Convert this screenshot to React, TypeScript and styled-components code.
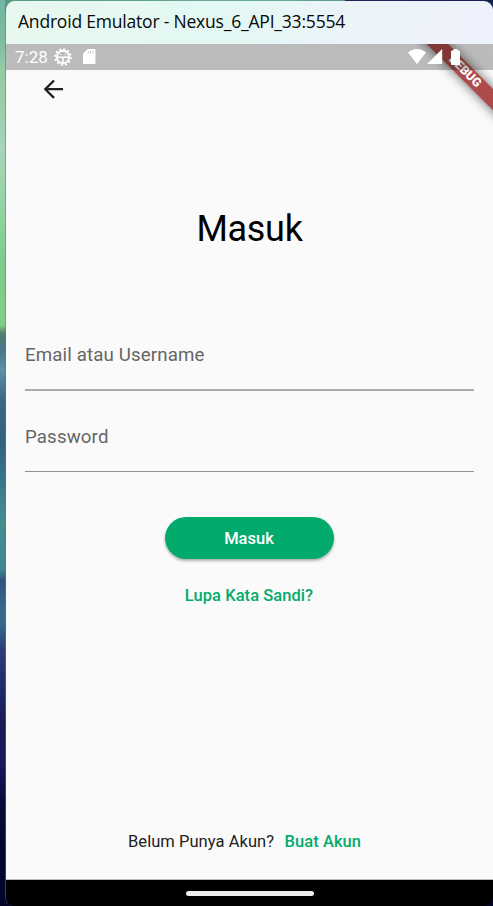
import React from "react";
import styled, { createGlobalStyle } from "styled-components";

const GREEN = "#02ab6c";

const Global = createGlobalStyle`
  * { box-sizing: border-box; }
  html, body { margin: 0; padding: 0; }
  body { font-family: Roboto, sans-serif; overflow: hidden; }
`;

const Desktop = styled.div`
  width: 493px;
  height: 906px;
  padding: 1px 0 0 5px;
  overflow: hidden;
  background:
    linear-gradient(90deg, #5c978b 0, #6ba897 260px, #5d9a90 339px, #1d2856 341px, #151f50 100%) 5px 0 / 100% 12px no-repeat,
    linear-gradient(180deg, #72b7a4 0, #78b9a0 30px, #93cba5 70px, #9bcfac 110px, #a9d4b8 150px, #8fd3a0 215px, #7dcc8c 265px,
      #82cf8a 325px, #54806f 333px, #47758a 350px, #5e8fa5 370px, #3c6787 400px, #32617f 440px, #3b7c8c 490px,
      #468d90 522px, #40868f 570px, #2f5480 580px, #38698b 610px, #37688a 625px, #2b3c76 650px, #202a68 690px,
      #171c55 725px, #14195a 765px, #0b0a3c 800px, #05042f 850px, #05052a 906px);
`;

const Emulator = styled.div`
  height: 905px;
  width: 488px;
  display: flex;
  flex-direction: column;
  overflow: hidden;
  border-left: 1px solid rgba(110, 110, 120, 0.55);
  border-radius: 9px;
`;

const TitleBar = styled.header`
  height: 43px;
  flex: none;
  padding: 0 0 3px 12px;
  display: flex;
  align-items: center;
  background: linear-gradient(100deg, #e8f8ef 0%, #e3f8f4 45%, #edf3fa 75%, #eef2fc 100%);
  color: #080808;
  font: 17.5px "Open Sans", sans-serif;
  letter-spacing: -0.2px;
  white-space: pre;
`;

const Screen = styled.main`
  position: relative;
  height: 835px;
  flex: none;
  overflow: hidden;
  display: flex;
  flex-direction: column;
  align-items: center;
  background: #fafafa;
`;

const StatusBar = styled.div`
  position: relative;
  z-index: 2;
  width: 100%;
  height: 26px;
  flex: none;
  background: rgba(0, 0, 0, 0.25);
  color: #fff;
  display: flex;
  justify-content: space-between;
`;

const Clock = styled.span`
  font-size: 17px;
  line-height: 26px;
  width: 39px;
`;

const StatusGroup = styled.div<{ $side: "left" | "right" }>`
  display: flex;
  align-items: center;
  padding: ${(p) => (p.$side === "left" ? "0 0 1px 9px" : "0 33px 1px 0")};
`;

const Ribbon = styled.div`
  position: absolute;
  left: 389.2px;
  top: 19.5px;
  width: 140px;
  height: 14.6px;
  transform: rotate(45deg);
  background: #ae4a4a;
  box-shadow: 0 0 12px rgba(0, 0, 0, 0.6);
  color: #fff;
  font-size: 12.4px;
  font-weight: 900;
  line-height: 14.6px;
  text-align: center;
`;

const AppBar = styled.div`
  width: 100%;
  height: 40px;
  flex: none;
  padding: 9px 0 0 38px;
`;

const Heading = styled.h1`
  margin: 97px 0 0;
  height: 44px;
  flex: none;
  color: #000;
  font-size: 36px;
  font-weight: 400;
  line-height: 44px;
  letter-spacing: -0.3px;
`;

const Form = styled.form`
  width: 449px;
  flex: none;
  margin-top: 89px;
  display: flex;
  flex-direction: column;
  gap: 31px;
`;

const Field = styled.label<{ $line: number; $tone: string }>`
  height: ${(p) => 49 + p.$line}px;
  display: block;
  border-bottom: ${(p) => p.$line}px solid ${(p) => p.$tone};
  color: #666;
  font-size: 18.7px;
  line-height: 22px;
  letter-spacing: 0.13px;
  padding-top: 4px;
`;

const SubmitButton = styled.button`
  width: 169.5px;
  height: 42px;
  flex: none;
  margin-top: 45px;
  border: 0;
  padding: 1px 1px 0 0;
  border-radius: 21px;
  background: ${GREEN};
  color: #fff;
  font: 500 16.5px/41px Roboto, sans-serif;
  box-shadow: 0 2px 3px rgba(0, 0, 0, 0.3);
`;

const TextLink = styled.a`
  color: ${GREEN};
  font-size: 16.5px;
  font-weight: 500;
  line-height: 20px;
  letter-spacing: 0.05px;
`;

const Forgot = styled.div`
  margin: 27px 1px 0 0;
  height: 20px;
`;

const Footer = styled.footer`
  margin-top: auto;
  padding-bottom: 27px;
  width: 100%;
  padding-left: 122px;
  display: flex;
  gap: 10.5px;
  color: #222;
  font-size: 16.5px;
  line-height: 20px;
  letter-spacing: 0.05px;
`;

const NavBar = styled.div`
  height: 27px;
  flex: none;
  border-top: 1px solid #bbb;
  background: #000;
  display: flex;
  justify-content: center;
  padding-top: 11px;
`;

const Handle = styled.div`
  width: 128px;
  height: 5px;
  border-radius: 3px;
  background: #ececec;
`;

const GearIcon = () => (
  <svg width="18" height="18" viewBox="0 0 18 18" fill="none" stroke="#fff">
    <circle cx="9" cy="9" r="6.2" strokeWidth="1.9" />
    <circle cx="9" cy="9" r="7.9" strokeWidth="1.8" strokeDasharray="2.1 2.036" />
    <path d="M3 9.2h12M9 9v6" strokeWidth="1.6" />
    <path d="M6.3 6.5h1.2M10.5 6.5h1.2" strokeWidth="1.2" />
  </svg>
);

const CardIcon = () => (
  <svg width="12.5" height="15" viewBox="0 0 12 15" preserveAspectRatio="none">
    <path
      fill="#fff"
      fillRule="evenodd"
      d="M4.5 0H11a1 1 0 0 1 1 1v13a1 1 0 0 1-1 1H1a1 1 0 0 1-1-1V4.5zM4.6 1.8v3h.8v-3zM6.9 1.8v3h.8v-3zM9.2 1.8v3h.8v-3z"
    />
  </svg>
);

const WifiIcon = () => (
  <svg width="18" height="15" viewBox="0 0 19 15" preserveAspectRatio="none">
    <path fill="#fff" d="M0 3.6C5.4-1.1 13.6-1.1 19 3.6L9.5 15z" />
  </svg>
);

const SignalIcon = () => (
  <svg width="16" height="15" viewBox="0 0 16 15">
    <path fill="#fff" d="M15.2 0v15H0z" />
  </svg>
);

const BatteryIcon = () => (
  <svg width="9" height="16" viewBox="0 0 9 16">
    <path fill="#fff" d="M2.5 0h4v1.5H8a1 1 0 0 1 1 1V15a1 1 0 0 1-1 1H1a1 1 0 0 1-1-1V2.5a1 1 0 0 1 1-1h1.5z" />
  </svg>
);

const BackIcon = () => (
  <svg width="20" height="20" viewBox="0 0 20 20" fill="none" stroke="#212121" strokeWidth="2.3">
    <path d="M19 10.2H1.8M10 1.5 1.3 10.2l8.7 8.7" />
  </svg>
);

const IconSlot = styled.span<{ $gap: number }>`
  display: flex;
  margin-left: ${(p) => p.$gap}px;
`;

export default function App() {
  return (
    <>
      <Global />
      <Desktop>
        <Emulator>
          <TitleBar>Android Emulator - Nexus_6_API_33:5554</TitleBar>
          <Screen>
            <StatusBar>
              <StatusGroup $side="left">
                <Clock>7:28</Clock>
                <GearIcon />
                <IconSlot $gap={11}><CardIcon /></IconSlot>
              </StatusGroup>
              <StatusGroup $side="right">
                <WifiIcon />
                <IconSlot $gap={1}><SignalIcon /></IconSlot>
                <IconSlot $gap={8}><BatteryIcon /></IconSlot>
              </StatusGroup>
            </StatusBar>
            <AppBar><BackIcon /></AppBar>
            <Heading>Masuk</Heading>
            <Form>
              <Field $line={2} $tone="#ababab">Email atau Username</Field>
              <Field $line={1} $tone="#929292">Password</Field>
            </Form>
            <SubmitButton type="button">Masuk</SubmitButton>
            <Forgot><TextLink>Lupa Kata Sandi?</TextLink></Forgot>
            <Footer>
              <span>Belum Punya Akun?</span>
              <TextLink>Buat Akun</TextLink>
            </Footer>
            <Ribbon>DEBUG</Ribbon>
          </Screen>
          <NavBar><Handle /></NavBar>
        </Emulator>
      </Desktop>
    </>
  );
}
